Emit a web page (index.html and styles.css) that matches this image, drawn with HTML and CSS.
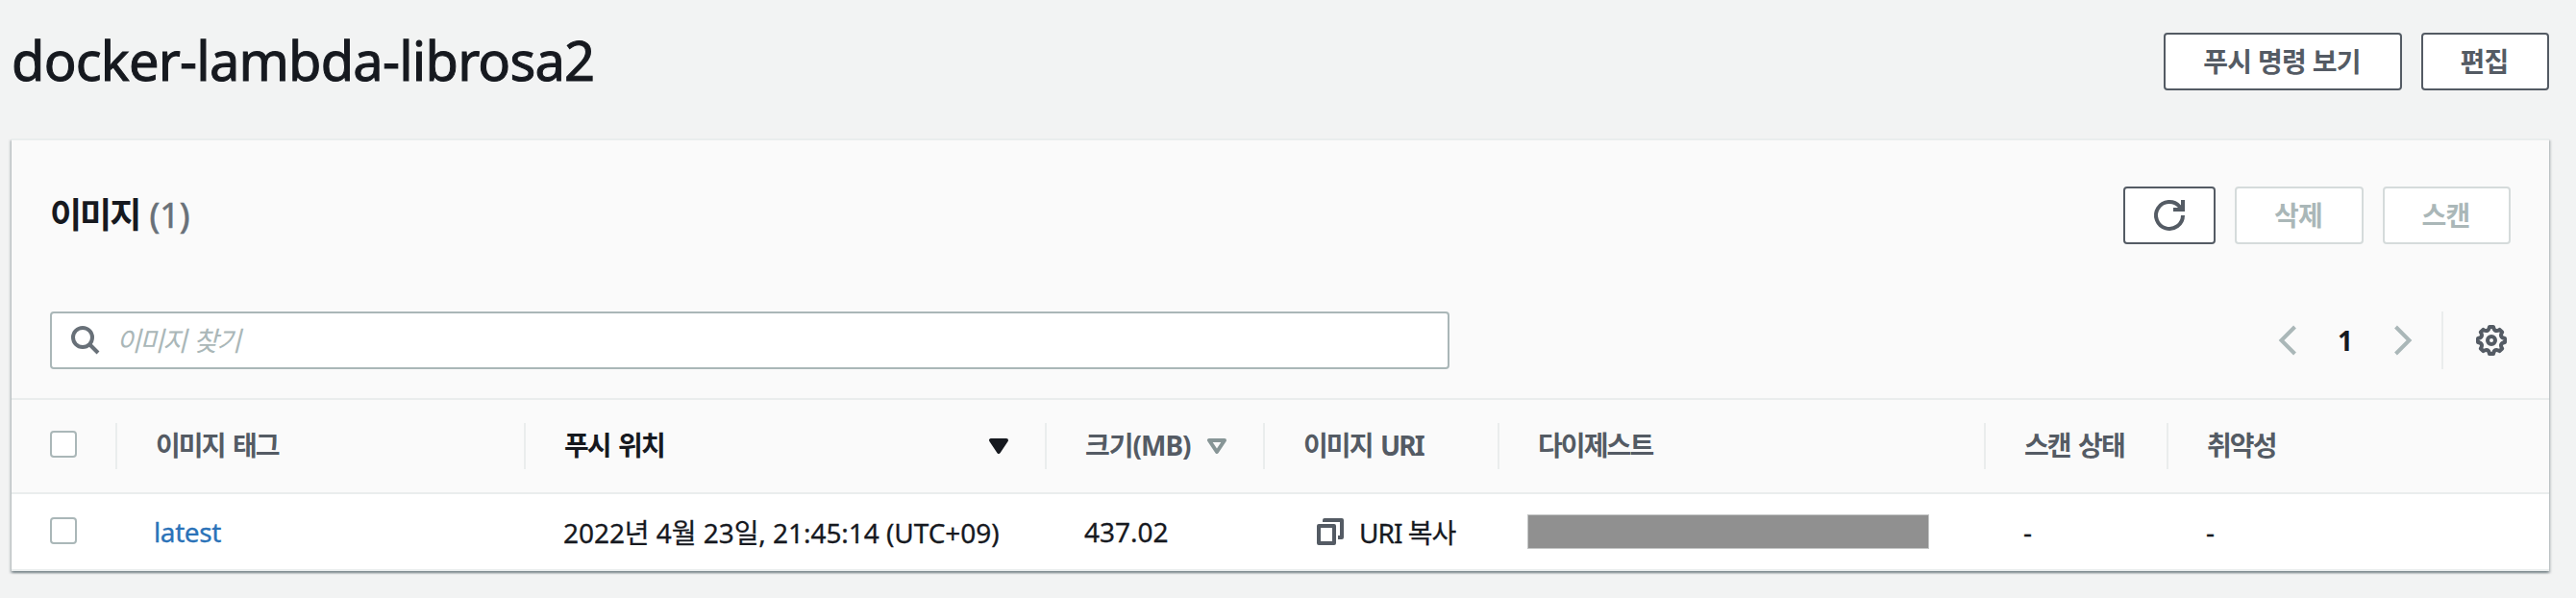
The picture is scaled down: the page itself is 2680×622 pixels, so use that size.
FILE: index.html
```html
<!DOCTYPE html>
<html lang="ko">
<head>
    <meta charset="UTF-8">
    <meta name="viewport" content="width=device-width, initial-scale=1.0">
    <title>docker-lambda-librosa2</title>
    <link rel="stylesheet" href="styles.css">
</head>
<body>
    <header class="page-header">
        <h1>docker-lambda-librosa2</h1>
        <div class="actions">
            <button class="btn btn-push" type="button"><span>푸시 명령 보기</span></button>
            <button class="btn btn-edit" type="button"><span>편집</span></button>
        </div>
    </header>
    <main class="panel">
        <div class="panel-header">
            <h2><span class="heading-text">이미지</span><span class="count">(1)</span></h2>
            <div class="actions">
                <button class="btn btn-refresh" type="button" aria-label="새로 고침">
                    <svg width="32" height="32" viewBox="0 0 32 32" fill="none" stroke="#545b64" stroke-width="4">
                        <path d="M30 16A14 14 0 1 1 26.500 6.700L29 10"/>
                        <path d="M20 10H30V0"/>
                    </svg>
                </button>
                <button class="btn btn-delete" type="button" disabled><span>삭제</span></button>
                <button class="btn btn-scan" type="button" disabled><span>스캔</span></button>
            </div>
        </div>
        <div class="toolbar">
            <div class="search">
                <svg width="30" height="30" viewBox="0 0 30 30" fill="none" stroke="#687078" stroke-width="4">
                    <circle cx="12" cy="12" r="10"/>
                    <path d="M19 19L28 28"/>
                </svg>
                <span class="placeholder">이미지 찾기</span>
            </div>
            <div class="pagination">
                <svg width="18" height="32" viewBox="0 0 18 32" fill="none" stroke="#aab7b8" stroke-width="4">
                    <path d="M16.500 2L2.500 16L16.500 30"/>
                </svg>
                <span class="page">1</span>
                <svg width="18" height="32" viewBox="0 0 18 32" fill="none" stroke="#aab7b8" stroke-width="4">
                    <path d="M1.500 2L15.500 16L1.500 30"/>
                </svg>
                <div class="settings">
                    <svg width="32" height="32" viewBox="0 0 32 32" fill="none" stroke="#545b64" stroke-width="4" stroke-linejoin="round">
                        <path d="M14 2H18Q19.300 8.200 24.500 4.800L27.200 7.500Q23.800 12.700 30 14V18Q23.800 19.300 27.200 24.500L24.500 27.200Q19.300 23.800 18 30H14Q12.700 23.800 7.500 27.200L4.800 24.500Q8.200 19.300 2 18V14Q8.200 12.700 4.800 7.500L7.500 4.800Q12.700 8.200 14 2Z"/>
                        <circle cx="16" cy="16" r="4"/>
                    </svg>
                </div>
            </div>
        </div>
        <table class="images">
            <colgroup>
                <col class="col-check">
                <col class="col-tag">
                <col class="col-pushed">
                <col class="col-size">
                <col class="col-uri">
                <col class="col-digest">
                <col class="col-status">
                <col class="col-vuln">
            </colgroup>
            <thead>
                <tr>
                    <th><div class="cell"><i class="checkbox"></i></div></th>
                    <th><div class="cell"><span>이미지 태그</span></div></th>
                    <th class="sorted"><div class="cell"><span>푸시 위치</span>
                        <svg width="20" height="16" viewBox="0 0 20 16"><path d="M2 2H18L10 14Z" fill="#16191f" stroke="#16191f" stroke-width="4" stroke-linejoin="round"/></svg></div></th>
                    <th><div class="cell"><span class="size-label">크기(MB)</span>
                        <svg width="20" height="16" viewBox="0 0 20 16"><path d="M2 2H18L10 14Z" fill="none" stroke="#879596" stroke-width="4" stroke-linejoin="round"/></svg></div></th>
                    <th><div class="cell"><span>이미지 URI</span></div></th>
                    <th><div class="cell"><span>다이제스트</span></div></th>
                    <th><div class="cell"><span>스캔 상태</span></div></th>
                    <th><div class="cell"><span>취약성</span></div></th>
                </tr>
            </thead>
            <tbody>
                <tr>
                    <td><div class="cell check"><i class="checkbox"></i></div></td>
                    <td><div class="cell"><a class="tag" href="#">latest</a></div></td>
                    <td><div class="cell"><span class="date">2022년 4월 23일, 21:45:14 (UTC+09)</span></div></td>
                    <td><div class="cell"><span class="size">437.02</span></div></td>
                    <td><div class="cell copy">
                        <svg width="28" height="28" viewBox="0 0 28 28" fill="none" stroke="#545b64" stroke-width="4" stroke-linejoin="round">
                            <path d="M2 8H18V26H2Z"/>
                            <path d="M8 4V2H26V20H22"/>
                        </svg>
                        <span>URI 복사</span></div></td>
                    <td><div class="cell digest"><div class="redacted"></div></div></td>
                    <td><div class="cell"><span>-</span></div></td>
                    <td><div class="cell"><span>-</span></div></td>
                </tr>
            </tbody>
        </table>
    </main>
</body>
</html>
```
FILE: styles.css
```css
* {
    box-sizing: border-box;
}
body {
    font-family: "Noto Sans", "Noto Sans CJK KR", sans-serif;
    font-size: 28px;
    margin: 0;
    min-height: 100vh;
    padding: 34px 28px 28px 12px;
    background-color: #f2f3f3;
    color: #16191f;
}
svg {
    display: block;
    flex: none;
    overflow: visible;
}
h1, h2 {
    margin: 0;
    line-height: 60px;
    white-space: nowrap;
}
h1 {
    font-size: 56px;
    line-height: 56px;
    font-weight: 400;
    letter-spacing: -0.8px;
    -webkit-text-stroke: 1px #16191f;
}
.page-header {
    display: flex;
    justify-content: space-between;
    height: 110px;
}
.actions {
    display: flex;
    gap: 20px;
}
.btn {
    display: flex;
    align-items: center;
    justify-content: center;
    height: 60px;
    padding: 0 2px 3px 0;
    font-family: inherit;
    font-size: 28px;
    font-weight: 700;
    letter-spacing: -0.7px;
    color: #545b64;
    background: #fff;
    border: 2px solid #545b64;
    border-radius: 4px;
    white-space: nowrap;
}
.btn:disabled {
    color: #aab7b8;
    border-color: #d5dbdb;
}
.btn-push {
    width: 248px;
}
.btn-edit, .btn-scan {
    width: 133px;
}
.btn-refresh {
    width: 96px;
    padding: 0;
}
.btn-delete {
    width: 134px;
}
.panel {
    height: 450px;
    background: #fafafa;
    border-top: 2px solid #eaeded;
    border-bottom: 2px solid #eaeded;
    box-shadow: 0 2px 2px 0 rgba(0, 28, 36, 0.3), 2px 2px 2px 0 rgba(0, 28, 36, 0.15), -2px 2px 2px 0 rgba(0, 28, 36, 0.15);
}
.panel-header {
    display: flex;
    justify-content: space-between;
    padding: 48px 40px 0;
    height: 178px;
}
h2 {
    font-size: 36px;
}
.heading-text {
    letter-spacing: -2px;
}
.count {
    margin-left: 10px;
    font-weight: 400;
    color: #687078;
    -webkit-text-stroke: 0.6px #687078;
}
.toolbar {
    display: flex;
    justify-content: space-between;
    padding: 0 40px;
    height: 90px;
}
.search {
    display: flex;
    align-items: center;
    width: 1456px;
    height: 60px;
    padding-left: 20px;
    background: #fff;
    border: 2px solid #aab7b8;
    border-radius: 4px;
}
.placeholder {
    margin-left: 17px;
    padding-bottom: 2px;
    font-style: italic;
    color: #aab7b8;
    letter-spacing: -1.8px;
    word-spacing: 3px;
}
.pagination {
    display: flex;
    align-items: center;
    height: 60px;
}
.page {
    width: 102px;
    text-align: center;
    font-weight: 700;
}
.settings {
    display: flex;
    align-items: center;
    height: 60px;
    margin-left: 31px;
    padding: 0 4px 0 34px;
    border-left: 2px solid #eaeded;
}
.images {
    width: 100%;
    table-layout: fixed;
    border-collapse: separate;
    border-spacing: 0;
}
.col-check { width: 110px; }
.col-tag { width: 425px; }
.col-pushed { width: 542px; }
.col-size { width: 227px; }
.col-uri { width: 244px; }
.col-digest { width: 506px; }
.col-status { width: 190px; }
th, td {
    padding: 0;
    text-align: left;
    white-space: nowrap;
}
th {
    height: 100px;
    border-top: 2px solid #eaeded;
    border-bottom: 2px solid #eaeded;
    color: #545b64;
    letter-spacing: -1.9px;
    word-spacing: 3px;
}
th .cell {
    display: flex;
    align-items: center;
    justify-content: space-between;
    height: 48px;
    padding: 0 38px 0 40px;
    border-right: 2px solid #eaeded;
}
th .cell span, th .checkbox {
    margin-bottom: 4px;
}
th:last-child .cell {
    border-right: none;
}
.sorted {
    color: #16191f;
}
.size-label {
    letter-spacing: -1px;
}
td {
    height: 78px;
    background: #fff;
    -webkit-text-stroke: 0.3px;
}
td .cell {
    display: flex;
    align-items: center;
    padding-left: 39px;
}
td .check {
    padding: 0 0 2px 40px;
}
.checkbox {
    width: 28px;
    height: 28px;
    background: #fff;
    border: 2px solid #aab7b8;
    border-radius: 4px;
}
.tag {
    color: #2a72b8;
    text-decoration: none;
    letter-spacing: -0.4px;
    margin-left: -1px;
}
.date {
    letter-spacing: -0.05px;
}
td .copy {
    padding-left: 54px;
    letter-spacing: -1px;
}
.copy span {
    margin-left: 16px;
}
td .digest {
    padding-left: 29px;
}
.redacted {
    width: 418px;
    height: 36px;
    background: #909090;
    border: 1px solid #c4c6c6;
}
```
